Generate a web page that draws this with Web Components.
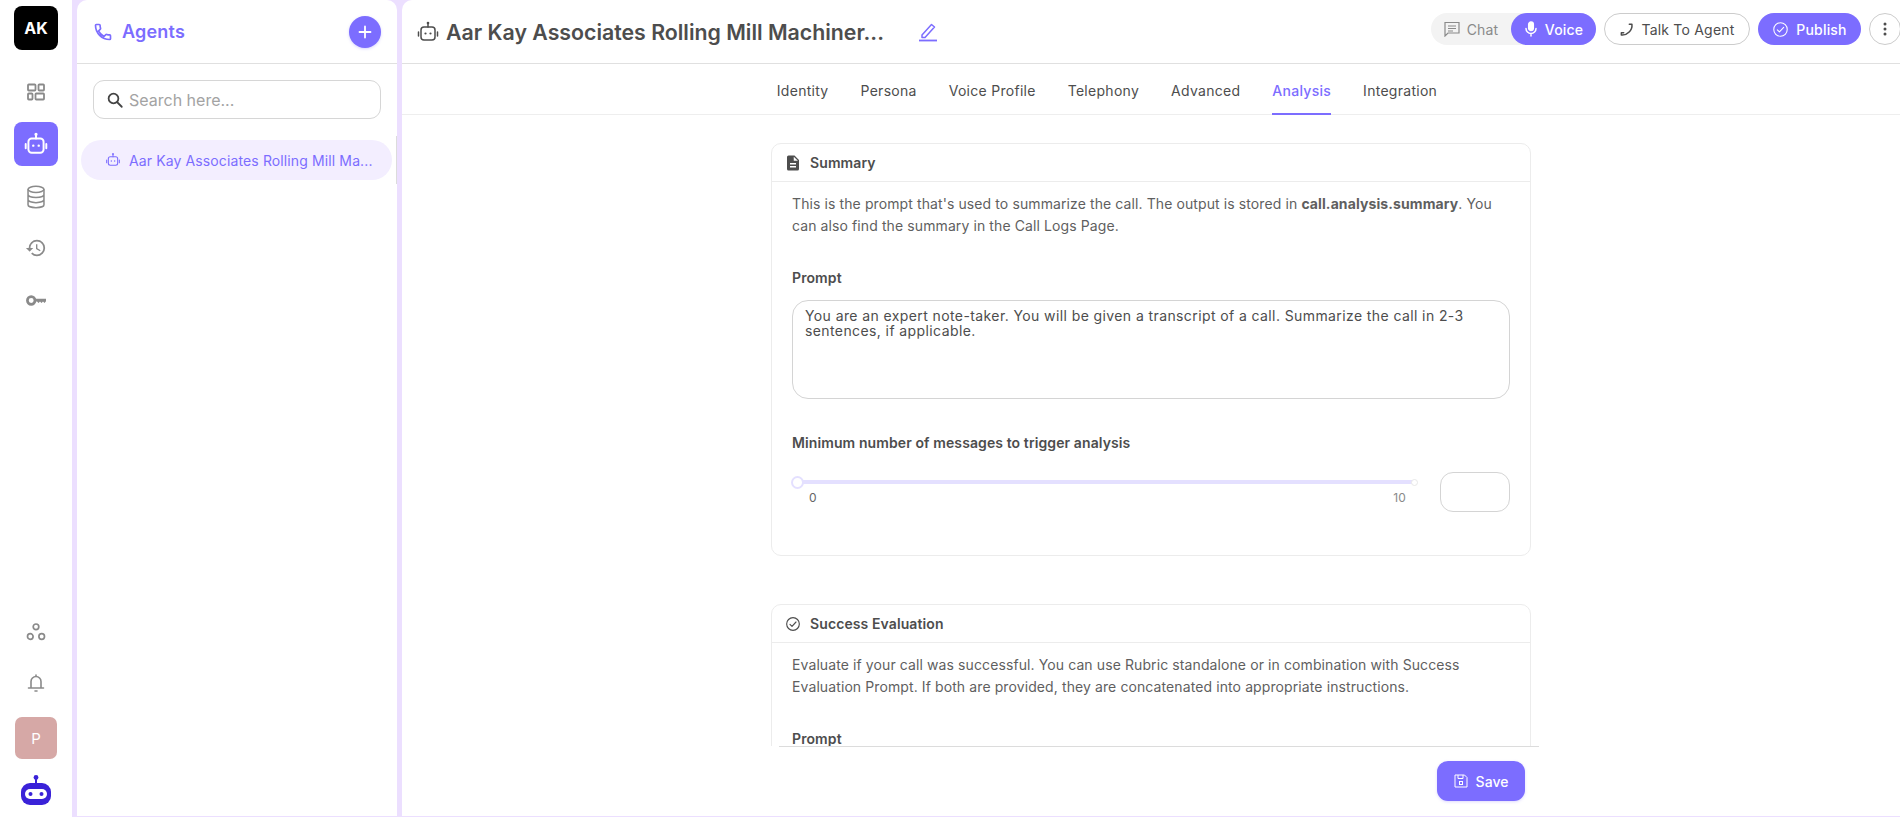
<!DOCTYPE html>
<html><head><meta charset="utf-8">
<style>
html,body{margin:0;padding:0;height:100%;overflow:hidden;background:#fff}
body{font-family:Inter,"Liberation Sans",sans-serif;color:#4d4d4d}
</style></head><body>
<app-shell>
  <app-rail slot="rail"></app-rail>
  <agents-panel slot="panel"></agents-panel>
  <agent-main slot="main">
    <agent-header></agent-header>
    <agent-tabs></agent-tabs>
    <div style="flex:1;min-height:0;overflow:hidden;display:flex;flex-direction:column;align-items:center;padding-top:28px;gap:48px">
      <setting-card title="Summary" icon="doc">
        <p style="margin:0"><span>This is the prompt that's used to summarize the call. The output is stored in </span><b>call.analysis.summary</b><span>. You </span><span>can also find the summary in the Call Logs Page.</span></p>
        <field-label style="margin-top:30px">Prompt</field-label>
        <prompt-box>You are an expert note-taker. You will be given a transcript of a call. Summarize the call in 2-3 sentences, if applicable.</prompt-box>
        <field-label style="margin-top:33px">Minimum number of messages to trigger analysis</field-label>
        <range-row></range-row>
      </setting-card>
      <setting-card title="Success Evaluation" icon="check">
        <p style="margin:0">Evaluate if your call was successful. You can use Rubric standalone or in combination with Success Evaluation Prompt. If both are provided, they are concatenated into appropriate instructions.</p>
        <field-label style="margin-top:30px">Prompt</field-label>
      </setting-card>
    </div>
    <save-bar></save-bar>
  </agent-main>
</app-shell>
<script>
const I={
 robot:(s,c,w=1.7)=>`<svg width="${s}" height="${s}" viewBox="0 0 24 24" fill="none" stroke="${c}" stroke-width="${w}" stroke-linecap="round" stroke-linejoin="round" style="display:block;flex:none"><rect x="5" y="7" width="14" height="13" rx="3"/><path d="M12 7V3.500M2.500 12v4M21.500 12v4"/><circle cx="12" cy="3" r=".6" fill="${c}"/><circle cx="9.500" cy="13.500" r="1.100" fill="${c}" stroke="none"/><circle cx="14.500" cy="13.500" r="1.100" fill="${c}" stroke="none"/></svg>`,
 phone:(s,c)=>`<svg width="${s}" height="${s}" viewBox="0 0 24 24" fill="none" stroke="${c}" stroke-width="2" stroke-linejoin="round" style="display:block;flex:none"><path d="M20 15.500c-1.250 0-2.450-.2-3.570-.570a1 1 0 0 0-1.020.240l-2.200 2.200a15 15 0 0 1-6.590-6.580l2.200-2.210a.96.96 0 0 0 .250-1A11.400 11.400 0 0 1 8.500 4a1 1 0 0 0-1-1H4a1 1 0 0 0-1 1c0 9.390 7.610 17 17 17a1 1 0 0 0 1-1v-3.500a1 1 0 0 0-1-1z"/></svg>`,
 search:(s,c)=>`<svg width="${s}" height="${s}" viewBox="0 0 24 24" fill="none" stroke="${c}" stroke-width="2.400" stroke-linecap="round" style="display:block;flex:none"><circle cx="10" cy="10" r="6.500"/><path d="M15 15l6 6"/></svg>`,
 doc:(s,c)=>`<svg width="${s}" height="${s}" viewBox="0 0 24 24" style="display:block;flex:none"><path fill="${c}" d="M14 2H6a2 2 0 0 0-2 2v16a2 2 0 0 0 2 2h12a2 2 0 0 0 2-2V8l-6-6zm2 16H8v-2h8v2zm0-4H8v-2h8v2zm-3-5V3.500L18.500 9H13z"/></svg>`,
 check:(s,c,w=1.7)=>`<svg width="${s}" height="${s}" viewBox="0 0 24 24" fill="none" stroke="${c}" stroke-width="${w}" stroke-linecap="round" stroke-linejoin="round" style="display:block;flex:none"><circle cx="12" cy="12" r="9.500"/><path d="M7.500 12.500l3 3 6-6.500"/></svg>`
};
function def(name,css,html){
  customElements.define(name,class extends HTMLElement{
    constructor(){super();this.attachShadow({mode:'open'}).innerHTML=`<style>${css}</style>`+html;}
  });
}
const P='#7c6dff', G='#8a8a8a';
def('app-shell',`:host{display:flex;height:100vh;width:100vw;overflow:hidden}
 .rail{width:72px;flex:none;background:#fff}
 .back{flex:1;min-width:0;display:flex;gap:5px;padding:0 0 1px 5px;background:#ecdfff}
 ::slotted([slot=panel]){width:320px;flex:none}
 ::slotted([slot=main]){flex:1;min-width:0}`,
 `<div class="rail"><slot name="rail"></slot></div><div class="back"><slot name="panel"></slot><slot name="main"></slot></div>`);

def('app-rail',`:host{display:flex;flex-direction:column;align-items:center;height:100%;box-sizing:border-box;padding:6px 0 11px}
 .ak{width:44px;height:44px;border-radius:8px;background:#000;color:#fff;font:700 16px Inter,sans-serif;display:flex;align-items:center;justify-content:center}
 .it{width:44px;height:44px;border-radius:8px;display:flex;align-items:center;justify-content:center;flex:none}
 .on{background:${P}}
 .sp{flex:1}
 .p{width:42px;height:42px;border-radius:7px;background:#d6a8a6;color:#fff;font:400 15px Inter,sans-serif;display:flex;align-items:center;justify-content:center;margin-top:12px}
 .logo{margin-top:16px}
 svg{display:block}`,
 `<div class="ak">AK</div>
 <div class="it" style="margin-top:20px"><svg width="18" height="18" viewBox="0 0 18 18" fill="none" stroke="${G}" stroke-width="1.800"><rect x="1" y="1.500" width="7.500" height="6" rx=".8"/><rect x="11.500" y="1.500" width="5.500" height="6" rx=".8"/><rect x="1" y="10.500" width="4.500" height="6" rx=".8"/><rect x="8.500" y="10.500" width="8.500" height="6" rx=".8"/></svg></div>
 <div class="it on" style="margin-top:8px">${I.robot(26,'#fff',1.800)}</div>
 <div class="it" style="margin-top:9px"><svg width="24" height="24" viewBox="0 0 22 22" fill="none" stroke="${G}" stroke-width="1.400"><ellipse cx="11" cy="4" rx="7.300" ry="2.800"/><path d="M3.700 4v14c0 1.600 3.300 2.800 7.300 2.800s7.300-1.200 7.300-2.800V4M3.700 8.700c0 1.600 3.300 2.800 7.300 2.800s7.300-1.200 7.300-2.800M3.700 13.400c0 1.600 3.300 2.800 7.300 2.800s7.300-1.200 7.300-2.800"/></svg></div>
 <div class="it" style="margin-top:7px"><svg width="22" height="22" viewBox="0 0 24 24"><path fill="${G}" d="M13 3a9 9 0 0 0-9 9H1l3.900 3.900.07.14L9 12H6c0-3.870 3.130-7 7-7s7 3.130 7 7-3.130 7-7 7c-1.930 0-3.680-.79-4.940-2.060l-1.420 1.420A8.954 8.954 0 0 0 13 21a9 9 0 0 0 0-18zm-1 5v5l4.280 2.540.72-1.210-3.500-2.080V8H12z"/></svg></div>
 <div class="it" style="margin-top:8px"><svg width="20" height="11" viewBox="0 0 20 11"><circle cx="5.200" cy="5.500" r="3.800" fill="none" stroke="${G}" stroke-width="2.700"/><path fill="${G}" d="M8.500 3.700H20v2.500l-1.500 1.800-1.500-1.600-1.500 1.600-1.500-1.600-1.500 1.600L11 6.500H8.500z"/></svg></div>
 <div class="sp"></div>
 <div class="it"><svg width="20" height="20" viewBox="0 0 20 20" fill="none" stroke="${G}" stroke-width="1.700"><circle cx="10" cy="4.800" r="2.800"/><circle cx="4.300" cy="14.500" r="2.800"/><circle cx="15.700" cy="14.500" r="2.800"/></svg></div>
 <div class="it" style="margin-top:7px"><svg width="20" height="20" viewBox="0 0 20 20" fill="none" stroke="${G}" stroke-width="1.600" stroke-linejoin="round" stroke-linecap="round"><path d="M5 15V8.500a5 5 0 0 1 10 0V15M2.500 15h15M10 2v1.500M9 18h2"/></svg></div>
 <div class="p">P</div>
 <div class="logo"><svg width="32" height="31" viewBox="0 0 32 31"><circle cx="16" cy="2.400" r="2.400" fill="#3a22d8"/><rect x="15" y="3" width="2" height="6" fill="#3a22d8"/><rect x="1" y="8" width="30" height="22" rx="9" fill="#3a22d8"/><rect x="5" y="14" width="22" height="10" rx="5" fill="#fff"/><circle cx="10.500" cy="19" r="2" fill="#3a22d8"/><circle cx="21.500" cy="19" r="2" fill="#3a22d8"/></svg></div>`);

def('agents-panel',`:host{display:block;position:relative;background:#fff;border-radius:10px 10px 0 0;height:100%;font-family:Inter,sans-serif}
 .head{height:63px;border-bottom:1px solid #e0e0e0;display:flex;align-items:center;padding:0 16px 0 16px;gap:9px;box-sizing:content-box}
 .head b{font-weight:600;font-size:18px;letter-spacing:.2px;color:${P};flex:1}
 .add{width:32px;height:32px;border-radius:50%;background:${P};color:#fff;display:flex;align-items:center;justify-content:center;box-shadow:0 1px 3px rgba(124,109,255,.3)}
 .search{margin:16px 16px 0;height:39px;box-sizing:border-box;border:1px solid #d6d6d6;border-radius:11px;display:flex;align-items:center;padding:0 12px;gap:5px;color:#a3a3a3;font-size:16px}
 .item{margin:21px 5px 0 4px;height:40px;border-radius:20px;background:#f3eeff;color:${P};display:flex;align-items:center;padding:0 19px 0 24px;gap:8px;font-size:14px;letter-spacing:.12px;white-space:nowrap}
 .sb{position:absolute;left:319px;top:136px;width:1px;height:48px;background:#dcdcdc}`,
 `<div class="head">${I.phone(20,P)}<b>Agents</b><div class="add"><svg width="14" height="14" viewBox="0 0 14 14" stroke="#fff" stroke-width="1.800" stroke-linecap="round"><path d="M7 1.500v11M1.500 7h11"/></svg></div></div>
 <div class="search">${I.search(18,'#444')}<span>Search here...</span></div>
 <div class="item">${I.robot(16,P,1.600)}<span>Aar Kay Associates Rolling Mill Ma...</span></div>
 <div class="sb"></div>`);

def('agent-main',`:host{display:flex;flex-direction:column;background:#fff;border-radius:10px 0 0 0;height:100%;min-height:0;font-family:Inter,sans-serif;overflow:hidden}`,`<slot></slot>`);

def('agent-header',`:host{display:flex;align-items:center;height:63px;flex:none;border-bottom:1px solid #e0e0e0;padding:0 0 0 14px;font-family:Inter,sans-serif;white-space:nowrap;box-sizing:content-box}
 h1{margin:0 0 0 6px;font-size:21.3px;font-weight:600;color:#4d4d4d;width:438px;white-space:nowrap}
 .edit{margin-left:34px}
 .sp{flex:1}
 .seg,.btn{align-self:flex-start;margin-top:13px}
 .seg{display:flex;height:32px;border-radius:16px;background:#f3f3f3;width:165px}
 .chat{flex:1;display:flex;align-items:center;justify-content:center;gap:7px;color:#8a8a8a;font-size:14px;letter-spacing:.2px}
 .voice{width:85px;border-radius:16px;background:${P};color:#fff;display:flex;align-items:center;justify-content:center;gap:7px;font-size:14px;font-weight:500;letter-spacing:.2px}
 .btn{height:32px;box-sizing:border-box;border-radius:16px;display:flex;align-items:center;justify-content:center;gap:7px;font-size:14px;margin-left:8px;letter-spacing:.2px}
 .ol{border:1px solid #ccc;color:#4d4d4d;background:#fff}
 .pub{background:${P};color:#fff;font-weight:500}
 .dots{width:32px;flex:none;margin-right:-1px}`,
 `${I.robot(24,'#4d4d4d',1.500)}<h1>Aar Kay Associates Rolling Mill Machiner...</h1>
 <svg class="edit" width="20" height="20" viewBox="0 0 20 20" fill="none" stroke="${P}" stroke-width="1.500" stroke-linejoin="round"><path d="M4 13L13.500 2.500l3 2.500L7 15.500H4z"/><path d="M1 18.500h18" stroke-width="1.800"/></svg>
 <div class="sp"></div>
 <div class="seg"><div class="chat"><svg width="16" height="16" viewBox="0 0 16 16" fill="none" stroke="#8a8a8a" stroke-width="1.200"><path d="M1 1.500h14v10.500H4L1 15z"/><path d="M4 5h8M4 7.500h8M4 10h5"/></svg>Chat</div><div class="voice"><svg width="14" height="16" viewBox="0 0 14 16" fill="none" stroke="#fff" stroke-width="1.500" stroke-linecap="round"><rect x="4.700" y="1" width="4.600" height="8.500" rx="2.300" fill="#fff"/><path d="M2 7.500a5 5 0 0 0 10 0M7 12.500V15"/></svg>Voice</div></div>
 <div class="btn ol" style="width:146px"><svg width="15" height="15" viewBox="0 0 16 16" fill="none" stroke="#4d4d4d" stroke-width="1.600" stroke-linecap="round" stroke-linejoin="round"><path d="M11 2.500h2.800C14.500 8.500 9 14.500 2.500 13.800V11.500H5"/></svg>Talk To Agent</div>
 <div class="btn pub" style="width:103px">${I.check(17,'#fff',1.500)}Publish</div>
 <div class="btn ol dots"><svg width="4" height="14" viewBox="0 0 4 14" fill="#4d4d4d"><circle cx="2" cy="2" r="1.500"/><circle cx="2" cy="7" r="1.500"/><circle cx="2" cy="12" r="1.500"/></svg></div>`);

def('agent-tabs',`:host{display:flex;justify-content:center;gap:32px;height:50px;flex:none;box-sizing:content-box;border-bottom:1px solid #eee;font-size:14px;letter-spacing:.28px;color:#4d4d4d;padding-right:88px}
 span{display:flex;align-items:center;height:51px;box-sizing:border-box;border-bottom:2px solid transparent;padding-top:4px}
 .on{color:${P};border-bottom-color:${P};font-weight:500}`,
 ['Identity','Persona','Voice Profile','Telephony','Advanced','Analysis','Integration'].map(t=>`<span class="${t=='Analysis'?'on':''}">${t}</span>`).join(''));

customElements.define('setting-card',class extends HTMLElement{
 constructor(){super();this.attachShadow({mode:'open'})}
 connectedCallback(){
  const ic=this.getAttribute('icon');
  this.shadowRoot.innerHTML=`<style>:host{display:block;width:760px;flex:none;box-sizing:border-box;border:1px solid #ececec;border-radius:10px;background:#fff;font-family:Inter,sans-serif}
  .h{height:37px;border-bottom:1px solid #ececec;display:flex;align-items:center;padding:0 13px;gap:9px;font-size:14px;font-weight:600;letter-spacing:.1px;color:#4d4d4d;box-sizing:content-box}
  .i{width:16px;height:18px;display:flex;align-items:center;justify-content:center}
  .b{padding:11px 20px 43px;font-size:14px;line-height:22px;letter-spacing:.1px;color:#5f5f5f}</style>
  <div class="h"><div class="i">${ic=='doc'?I.doc(18,'#4d4d4d'):I.check(16,'#4d4d4d')}</div><span>${this.getAttribute('title')}</span></div>
  <div class="b"><slot></slot></div>`;
 }});

def('field-label',`:host{display:block;font-size:14px;font-weight:600;line-height:22px;color:#4d4d4d}`,`<slot></slot>`);

def('prompt-box',`:host{display:block;box-sizing:border-box;height:99px;margin-top:11px;border:1px solid #d4d4d4;border-radius:16px;padding:7px 12px;font-size:14px;letter-spacing:.4px;line-height:15px;color:#4d4d4d}`,`<slot></slot>`);

def('range-row',`:host{display:flex;margin-top:17px;gap:20px;align-items:flex-start}
 .l{flex:1;padding-top:4px}
 .t{position:relative;height:4px;background:#e4e0ff;margin:5px 5px 0 5px}
 .k{position:absolute;width:13px;height:13px;border-radius:50%;background:#fff;box-sizing:border-box;border:2px solid #e4e0ff;left:-6px;top:-4.500px}
 .e{position:absolute;width:7px;height:7px;border-radius:50%;background:#fff;box-sizing:border-box;border:1.500px solid #e8e8e8;right:-3px;top:-1.500px}
 .n{display:flex;justify-content:space-between;margin-top:6px;padding:0 14px 0 17px;font-size:12px;line-height:16px;color:#8a8a8a}
 .box{width:70px;height:40px;box-sizing:border-box;border:1px solid #d4d4d4;border-radius:13px;flex:none;margin-top:1px}`,
 `<div class="l"><div class="t"><div class="k"></div><div class="e"></div></div><div class="n"><span style="color:#666">0</span><span>10</span></div></div><div class="box"></div>`);

def('save-bar',`:host{display:flex;justify-content:flex-end;flex:none;height:70px;box-sizing:border-box;width:760px;margin-left:377px;border-top:1px solid #dcdcdc;padding:14px 14px 0 0;background:#fff}
 .s{width:88px;height:40px;border-radius:11px;background:${P};color:#fff;display:flex;align-items:center;justify-content:center;gap:8px;font-size:14px;font-weight:500;box-shadow:0 1px 3px rgba(124,109,255,.25)}`,
 `<div class="s"><svg width="14" height="14" viewBox="0 0 14 14" fill="none" stroke="#fff" stroke-width="1"><path d="M1 1h9.500L13 3.500V13H1z"/><path d="M4 1v3.500h5V1"/><rect x="5.500" y="7.500" width="3" height="3"/></svg>Save</div>`);
</script>
</body></html>
